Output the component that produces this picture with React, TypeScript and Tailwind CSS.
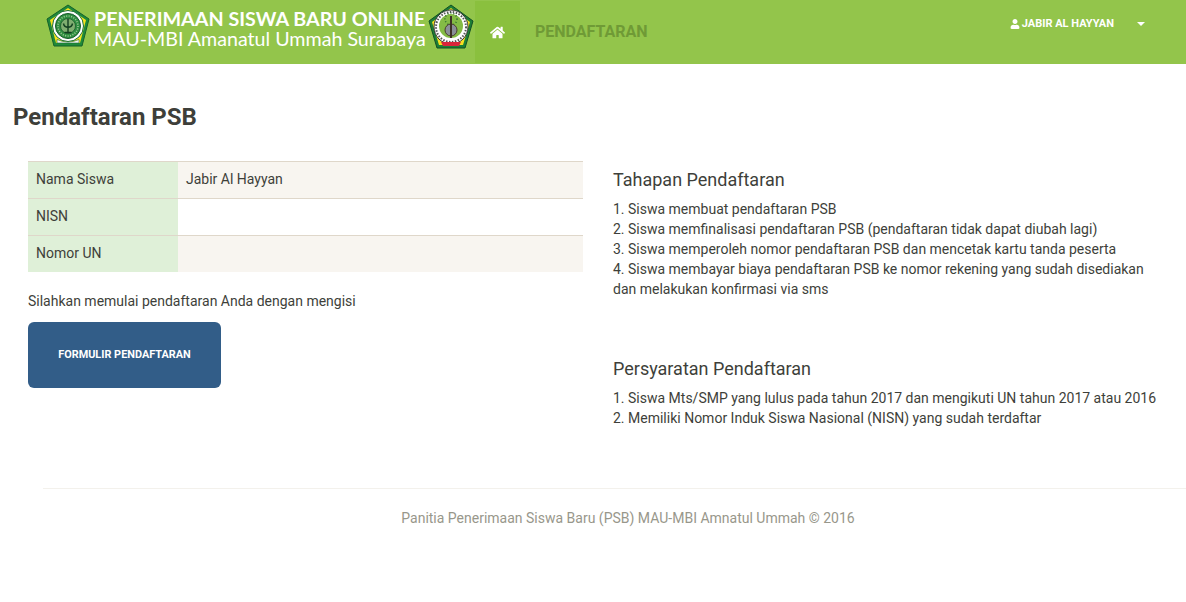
import { FaHome, FaUser } from "react-icons/fa";

const LeftLogo = () => (
  <svg width="46" height="46" viewBox="0 0 46 46" className="shrink-0">
    <polygon points="23,1 44,15 37,42 9,42 2,15" fill="#1f8a3a" stroke="#14612a" strokeWidth="1" strokeLinejoin="round" />
    <polygon points="23,4 41,16 35,39 11,39 5,16" fill="#f7e21b" />
    <circle cx="23" cy="22" r="15.5" fill="#fff" stroke="#1b6e33" strokeWidth="1" />
    <circle cx="23" cy="22" r="12.5" fill="#2f8f40" stroke="#16592a" strokeWidth="1" />
    <circle cx="23" cy="22" r="10" fill="none" stroke="#a9c9a0" strokeWidth="1.5" strokeDasharray="1 1.5" />
    <circle cx="23" cy="22" r="7.5" fill="#7fae70" stroke="#1a5a2c" strokeWidth=".8" />
    <path d="M23 15v13M18.5 19.5c1 5 8 5 9 0M19.5 28.5h7" fill="none" stroke="#123f20" strokeWidth="1.4" />
    <path d="M12 35.5q11 5 22 0v3.5h-22z" fill="#f3f3f3" stroke="#1b6e33" strokeWidth=".6" />
  </svg>
);

const RightLogo = () => (
  <svg width="46" height="46" viewBox="0 0 46 46" className="shrink-0">
    <polygon points="23,1 45,17 37,44 9,44 1,17" fill="#1c7f36" stroke="#124f24" strokeWidth="1" strokeLinejoin="round" />
    <polygon points="23,4 42,18 35,41 11,41 4,18" fill="#f5e020" />
    <circle cx="23" cy="23" r="17" fill="#fff" stroke="#333" strokeWidth="1" />
    <circle cx="23" cy="23" r="15" fill="none" stroke="#555" strokeWidth="2" strokeDasharray="1.5 1.5" />
    <circle cx="23" cy="22" r="12" fill="#84bb45" />
    <circle cx="23" cy="15" r="6" fill="none" stroke="#2d6b2c" strokeWidth="1.5" strokeDasharray="1 2" />
    <circle cx="23" cy="26" r="6" fill="#8a8f98" stroke="#4b3d2e" strokeWidth="1" />
    <path d="M23 12v22" fill="none" stroke="#3d3126" strokeWidth="2" />
    <path d="M13 38h20l-2 4H15z" fill="#d9263a" />
  </svg>
);

const rows = [
  { label: "Nama Siswa", value: "Jabir Al Hayyan", bg: "bg-[#f8f5f0]" },
  { label: "NISN", value: "", bg: "bg-white" },
  { label: "Nomor UN", value: "", bg: "bg-[#f8f5f0]" },
];

const tahapan = [
  "1. Siswa membuat pendaftaran PSB",
  "2. Siswa memfinalisasi pendaftaran PSB (pendaftaran tidak dapat diubah lagi)",
  "3. Siswa memperoleh nomor pendaftaran PSB dan mencetak kartu tanda peserta",
  "4. Siswa membayar biaya pendaftaran PSB ke nomor rekening yang sudah disediakan dan melakukan konfirmasi via sms",
];

const syarat = [
  "1. Siswa Mts/SMP yang lulus pada tahun 2017 dan mengikuti UN tahun 2017 atau 2016",
  "2. Memiliki Nomor Induk Siswa Nasional (NISN) yang sudah terdaftar",
];

const App = () => {
  return (
    <div className="min-h-[602px] bg-white font-['Roboto',sans-serif] text-[14px] leading-[20px] text-[#3e3f3a]">
      <header className="flex h-16 items-start bg-[#93c54b] pl-[45px]">
        <div className="flex h-[54px] items-center">
          <LeftLogo />
          <div className="ml-[3px] w-[334px] pt-[3px] font-['Lato',sans-serif] text-white">
            <div className="text-[19.7px] leading-[20px] font-bold whitespace-nowrap">PENERIMAAN SISWA BARU ONLINE</div>
            <div className="text-[19.65px] leading-[20px] whitespace-nowrap">MAU-MBI Amanatul Ummah Surabaya</div>
          </div>
          <RightLogo />
        </div>
        <div className="mt-[1px] ml-[1px] flex h-[62px] w-[45px] items-center justify-center bg-[#8ac03e] text-white">
          <FaHome size={15} />
        </div>
        <div className="ml-[15px] flex h-[62px] items-center pt-[1px] text-[16px] font-bold text-[#6f9a36]">PENDAFTARAN</div>
        <div className="mt-[14px] ml-auto flex h-5 items-center pr-[41px] text-[11px] font-bold text-white">
          <FaUser size={10} className="mr-[2px]" />
          <span>JABIR AL HAYYAN</span>
          <span className="ml-[23px] h-0 w-0 border-x-[4px] border-t-[4px] border-x-transparent border-t-white" />
        </div>
      </header>

      <h1 className="mt-[39px] ml-[13px] text-[24px] leading-[28px] font-bold text-[#3e3f3a]">Pendaftaran PSB</h1>

      <div className="mt-[30px] flex pl-[28px]">
        <div className="w-[555px]">
          {rows.map((row) => (
            <div key={row.label} className="flex h-[37px] border-t border-[#dfd7ca]">
              <div className="flex w-[150px] items-center bg-[#dff0d8] px-2 pb-[2px]">{row.label}</div>
              <div className={`flex flex-1 items-center px-2 pb-[2px] ${row.bg}`}>{row.value}</div>
            </div>
          ))}
          <p className="mt-[19px]">Silahkan memulai pendaftaran Anda dengan mengisi</p>
          <button className="mt-[11px] h-[66px] w-[193px] rounded-[6px] bg-[#325d88] text-[10.9px] font-bold text-white">
            FORMULIR PENDAFTARAN
          </button>
        </div>

        <div className="ml-[30px] w-[545px] pt-[7px]">
          <h3 className="text-[18px] leading-[24px]">Tahapan Pendaftaran</h3>
          <div className="mt-[7px]">
            {tahapan.map((t) => (
              <p key={t}>{t}</p>
            ))}
          </div>
          <h3 className="mt-[58px] text-[18px] leading-[24px]">Persyaratan Pendaftaran</h3>
          <div className="mt-[7px]">
            {syarat.map((t) => (
              <p key={t}>{t}</p>
            ))}
          </div>
        </div>
      </div>

      <footer className="mt-[60px] ml-[43px] border-t border-[#f3f1ec] pt-[19px] pl-[27px] text-center text-[#98978b]">
        Panitia Penerimaan Siswa Baru (PSB) MAU-MBI Amnatul Ummah © 2016
      </footer>
    </div>
  );
};

export default App;
